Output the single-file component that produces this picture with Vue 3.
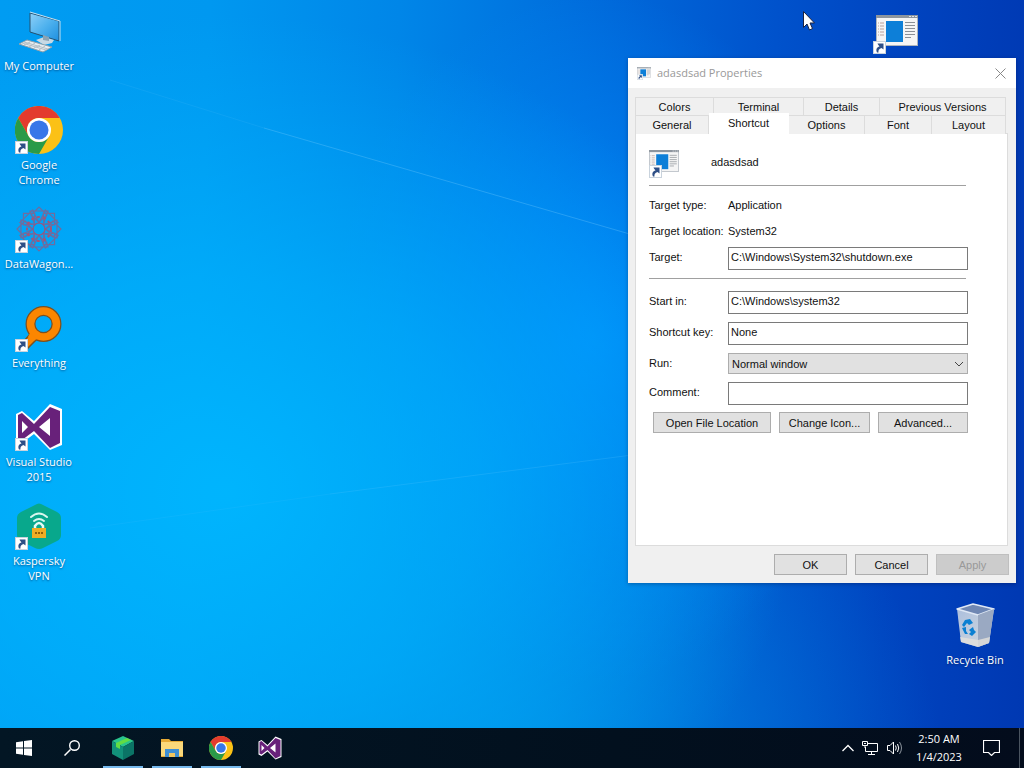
<script setup>
import { ref } from 'vue'

const desktopIcons = [
  { icon: 'computer', label: 'My Computer', shortcut: false },
  { icon: 'chrome', label: 'Google Chrome', shortcut: true },
  { icon: 'datawagon', label: 'DataWagon...', shortcut: true },
  { icon: 'everything', label: 'Everything', shortcut: true },
  { icon: 'vs', label: 'Visual Studio 2015', shortcut: true },
  { icon: 'vpn', label: 'Kaspersky VPN', shortcut: true },
]

const backTabs = ['Colors', 'Terminal', 'Details', 'Previous Versions']
const frontTabs = ['General', 'Shortcut', 'Options', 'Font', 'Layout']
const activeTab = ref('Shortcut')

const form = ref({
  target: 'C:\\Windows\\System32\\shutdown.exe',
  startIn: 'C:\\Windows\\system32',
  key: 'None',
  run: 'Normal window',
  comment: '',
})

const taskbarApps = [
  { icon: 'cube', label: 'Kaspersky', open: true },
  { icon: 'folder', label: 'File Explorer', open: true },
  { icon: 'chrome', label: 'Google Chrome', open: true },
  { icon: 'vs', label: 'Visual Studio', open: false },
]

const petals = [0, 45, 90, 135, 180, 225, 270, 315]
</script>

<template>
  <!-- shared icon shapes -->
  <svg class="sprite" aria-hidden="true">
    <linearGradient id="screen" x1="0" y1="0" x2="1" y2="1">
      <stop offset="0" stop-color="#8fd0f8" />
      <stop offset="0.5" stop-color="#4fb2ee" />
      <stop offset="1" stop-color="#1d8fe0" />
    </linearGradient>
    <linearGradient id="bin" x1="0" y1="0" x2="1" y2="1">
      <stop offset="0" stop-color="#a9bddd" />
      <stop offset="1" stop-color="#d4dade" />
    </linearGradient>
    <symbol id="computer" viewBox="0 0 48 48">
      <path d="M15 6 L44 14 V34 L15 25Z" fill="url(#screen)" stroke="#24506f" />
      <path d="M15 5 L45 14 V34" fill="none" stroke="#c6e2f2" />
      <path d="M21 33 L29 30 L39 33 L37 36 L29 38Z" fill="#c8d9e4" />
      <path d="M28 28 L34 30 V34 L28 33Z" fill="#8ba3b3" />
      <path d="M12 33 L37 40 L28 45 L4 37Z" fill="#e8edf0" stroke="#8fa0ab" />
      <path d="M9 35 L33 42 M7 36 L31 43 M15 35 L9 38 M20 36 L14 40 M25 38 L19 41 M30 39 L24 43" stroke="#b4bfc6" />
    </symbol>
    <symbol id="chrome" viewBox="0 0 48 48">
      <circle cx="24" cy="24" r="24" fill="#fbc116" />
      <path d="M3.2 12 A24 24 0 0 1 44.8 12 H24 A12 12 0 0 0 13.6 30Z" fill="#e33b2e" />
      <path d="M3.2 12 A24 24 0 0 0 24 48 L34.4 30 A12 12 0 0 1 13.6 30Z" fill="#2a9a48" />
      <circle cx="24" cy="24" r="12" fill="#fff" />
      <circle cx="24" cy="24" r="9.5" fill="#3877e8" />
    </symbol>
    <symbol id="datawagon" viewBox="0 0 48 48">
      <g fill="none" stroke="#6d6da0" stroke-width="1.200">
        <path v-for="a in petals" :key="a" d="M24 17 L16 10 L24 2 L32 10Z M20 20 L15 6 H33 L28 20" :transform="`rotate(${a} 24 24)`" />
        <circle cx="24" cy="24" r="6" stroke="#965783" />
        <circle cx="24" cy="24" r="12" stroke="#a55578" stroke-width="2" stroke-dasharray="3 3" />
      </g>
    </symbol>
    <symbol id="everything" viewBox="0 0 48 48">
      <path d="M16 29 L4 43 L9 48 L22 35" fill="#fb8600" stroke="#7c501f" stroke-width="1.5" />
      <circle cx="28.500" cy="20" r="13" fill="none" stroke="#7c501f" stroke-width="10" />
      <circle cx="28.500" cy="20" r="13" fill="none" stroke="#fb8600" stroke-width="7.500" />
      <path d="M15 29 L22 35 L18 37 L13 33Z" fill="#fb8600" />
    </symbol>
    <symbol id="vs" viewBox="0 0 48 48">
      <path d="M1 11 L7 8 L19 18 L35 1 L47 6 V42 L35 47 L19 31 L7 40 L1 37Z" fill="#fff" />
      <path d="M3 12 L7 10 L19 21 L35 4 L45 8 V40 L35 45 L19 28 L7 37 L3 35Z M7 18 V30 L13 24Z M35 15 L24 24 L35 33Z" fill="#68217a" fill-rule="evenodd" />
    </symbol>
    <symbol id="vpn" viewBox="0 0 48 48">
      <path d="M20 3 Q24 0 28 3 L42 10 Q46 12 46 16 V33 Q46 37 42 39 L28 46 Q24 48 20 46 L6 39 Q2 37 2 33 V16 Q2 12 6 10Z" fill="#08a88c" />
      <path d="M16 15 Q24 8 32 15 M19 19 Q24 15 29 19" fill="none" stroke="#d8f6ee" stroke-width="2" stroke-linecap="round" />
      <path d="M20 27 V24 Q24 18 28 24 V27" fill="none" stroke="#e8faf6" stroke-width="2.500" />
      <rect x="17" y="26" width="14" height="10" fill="#f0ad24" />
      <path d="M20 31 H22 M23 31 H25 M26 31 H28" stroke="#91610a" stroke-width="2" />
    </symbol>
    <symbol id="program" viewBox="0 0 42 31">
      <rect x="0.500" y="0.500" width="41" height="30" fill="#f5f5f5" stroke="#aeb5bd" />
      <path d="M0 1.500 H42" stroke="#8d959e" stroke-width="3" />
      <path d="M33 1.500 H35 M36 1.500 H38 M39 1.500 H41" stroke="#e0e3e6" />
      <rect x="10" y="6" width="17" height="21" fill="#0d7fd8" />
      <path d="M2 8 H8 M2 11 H8 M2 14 H8 M2 17 H8 M2 20 H8" stroke="#b9a29b" stroke-dasharray="1 1 4" />
      <path d="M29 7.500 H39 M29 10.500 H39 M29 13.500 H39 M29 16.500 H39 M29 19.500 H39 M29 22.500 H35" stroke="#8b9096" />
    </symbol>
    <symbol id="arrow" viewBox="0 0 13 13">
      <rect x="0.500" y="0.500" width="12" height="12" fill="#fff" stroke="#c9d3dd" />
      <path d="M4 11.500 C2.500 8 4 6 6.500 5.500 L5 3.500 L4.500 2.500 H10.500 V8.500 L8.500 7 C6 8 5 9 5.500 11.500Z" fill="#2e4f86" />
    </symbol>
    <symbol id="recycle" viewBox="0 0 42 46">
      <path d="M3 6 L19 1 L40 6 L35 40 L24 44 L7 39Z" fill="url(#bin)" />
      <path d="M3 6 L19 1 L40 6 L24 12Z" fill="#6f87b3" stroke="#dfe8f5" stroke-width="1.500" stroke-linejoin="round" />
      <path d="M24 12 L40 6 L35 40 L24 44Z" fill="#9aa9c2" />
      <path d="M6 34 L24 37 L36 34 L35 40 L24 44 L7 39Z" fill="#e4e1dc" opacity="0.800" />
      <path d="M11 17 L16 16 L19 20 L15 22 L13 20 L10 24 L8 22Z M8 25 L12 24 L12 28 L14 31 L11 31Z M15 27 L19 24 L20 27 L22 29 L18 33 L15 31 L17 29Z" fill="#0b80d2" />
    </symbol>
    <symbol id="cube" viewBox="0 0 24 24">
      <path d="M12 0 L23 5 L12 11 L1 5Z" fill="#29c48d" />
      <path d="M1 5 L12 11 V24 L1 18Z" fill="#12917a" />
      <path d="M23 5 L12 11 V24 L23 18Z" fill="#0b7466" />
      <path d="M5 7 L16 2 L20 4 L9 9 V13 L5 11Z" fill="#62dc44" />
    </symbol>
    <symbol id="folder" viewBox="0 0 24 24">
      <path d="M1 3 H9 L11 5 H23 V21 H1Z" fill="#e7aa35" />
      <path d="M1 6 H23 V20 H1Z" fill="#fbd87a" />
      <path d="M5 21 V13 H19 V21 H15 V17 H9 V21Z" fill="#3f8fd3" />
      <path d="M9 21 V17 H15 V21Z" fill="#f2c65f" />
    </symbol>
  </svg>

  <div class="screen">
    <svg class="rays" viewBox="0 0 1024 768" preserveAspectRatio="none" aria-hidden="true">
      <path d="M264 128 L640 237" stroke="#7cd0ff" opacity="0.300" />
      <path d="M110 80 L264 128" stroke="#7cd0ff" opacity="0.100" />
      <path d="M330 494 L640 454" stroke="#60c8ff" opacity="0.200" />
      <path d="M90 528 L330 494" stroke="#60c8ff" opacity="0.100" />
    </svg>

    <main class="desktop">
      <nav class="icon-column">
        <a v-for="item in desktopIcons" :key="item.label" href="#" class="desk-icon">
          <span class="icon-box">
            <svg class="icon-art"><use :href="'#' + item.icon" /></svg>
            <svg v-if="item.shortcut" class="badge"><use href="#arrow" /></svg>
          </span>
          <span class="icon-label">{{ item.label }}</span>
        </a>
      </nav>

      <a href="#" class="desk-icon program-icon" aria-label="adasdsad">
        <svg class="program-art"><use href="#program" /></svg>
        <svg class="badge"><use href="#arrow" /></svg>
      </a>
      <a href="#" class="desk-icon recycle-icon">
        <svg class="recycle-art"><use href="#recycle" /></svg>
        <span class="icon-label">Recycle Bin</span>
      </a>

      <section class="window" role="dialog" aria-label="adasdsad Properties">
        <header class="title-bar">
          <span class="title-icon">
            <svg class="title-art"><use href="#program" /></svg>
            <svg class="title-badge"><use href="#arrow" /></svg>
          </span>
          <span class="title-text">adasdsad Properties</span>
          <button class="close" aria-label="Close">
            <svg width="11" height="11" viewBox="0 0 11 11"><path d="M0.500 0.500 L10.500 10.500 M10.500 0.500 L0.500 10.500" stroke="#888" /></svg>
          </button>
        </header>

        <div class="tabs" role="tablist">
          <div class="tab-row back">
            <button v-for="t in backTabs" :key="t" role="tab" class="tab">{{ t }}</button>
          </div>
          <div class="tab-row front">
            <button
              v-for="t in frontTabs"
              :key="t"
              role="tab"
              class="tab"
              :class="{ active: t === activeTab }"
              :aria-selected="t === activeTab"
              @click="activeTab = t"
            >{{ t }}</button>
          </div>
        </div>

        <form class="panel" @submit.prevent>
          <div class="file-head">
            <span class="file-icon">
              <svg class="file-art"><use href="#program" /></svg>
              <svg class="badge"><use href="#arrow" /></svg>
            </span>
            <span class="file-name">adasdsad</span>
          </div>
          <hr />
          <div class="info">
            <span>Target type:</span><span>Application</span>
            <span>Target location:</span><span>System32</span>
          </div>
          <div class="field">
            <label for="target">Target:</label>
            <input id="target" v-model="form.target" type="text" spellcheck="false" />
          </div>
          <hr class="split" />
          <div class="fields">
            <div class="field">
              <label for="start">Start in:</label>
              <input id="start" v-model="form.startIn" type="text" spellcheck="false" />
            </div>
            <div class="field">
              <label for="key">Shortcut key:</label>
              <input id="key" v-model="form.key" type="text" spellcheck="false" />
            </div>
            <div class="field">
              <label for="run">Run:</label>
              <span class="select-wrap">
                <select id="run" v-model="form.run">
                  <option>Normal window</option>
                  <option>Minimized</option>
                  <option>Maximized</option>
                </select>
                <svg class="chevron" viewBox="0 0 10 6"><path d="M1 1 L5 5 L9 1" fill="none" stroke="#444" /></svg>
              </span>
            </div>
            <div class="field">
              <label for="comment">Comment:</label>
              <input id="comment" v-model="form.comment" type="text" />
            </div>
          </div>
          <div class="actions">
            <button type="button" class="btn">Open File Location</button>
            <button type="button" class="btn">Change Icon...</button>
            <button type="button" class="btn">Advanced...</button>
          </div>
        </form>

        <footer class="window-foot">
          <button class="btn">OK</button>
          <button class="btn">Cancel</button>
          <button class="btn" disabled>Apply</button>
        </footer>
      </section>

      <svg class="cursor" viewBox="0 0 12 20" aria-hidden="true">
        <path d="M0.500 0.500 V16.500 L4 13 L6.500 19 L9.500 17.500 L7 12 H11.500Z" fill="#fff" stroke="#1b2340" />
      </svg>
    </main>

    <footer class="taskbar">
      <button class="task-btn" aria-label="Start">
        <svg width="16" height="16" viewBox="0 0 16 16"><path d="M0 2.300 L7 1.300 V7.500 H0Z M8 1.100 L16 0 V7.500 H8Z M0 8.500 H7 V14.700 L0 13.700Z M8 8.500 H16 V16 L8 14.900Z" fill="#fff" /></svg>
      </button>
      <button class="task-btn" aria-label="Search">
        <svg width="16" height="16" viewBox="0 0 16 16"><path d="M0.500 15.500 L6.500 9.500" stroke="#fff" stroke-width="1.500" /><circle cx="10.500" cy="5.500" r="4.800" fill="none" stroke="#fff" stroke-width="1.400" /></svg>
      </button>
      <div class="apps">
        <button v-for="app in taskbarApps" :key="app.label" class="app" :class="{ open: app.open }" :aria-label="app.label">
          <svg class="app-art"><use :href="'#' + app.icon" /></svg>
        </button>
      </div>
      <div class="tray">
        <svg width="12" height="8" viewBox="0 0 12 8"><path d="M0.500 7 L6 1.500 L11.500 7" fill="none" stroke="#fff" stroke-width="1.300" /></svg>
        <svg width="17" height="14" viewBox="0 0 17 14"><path d="M5.500 2.500 H15.500 V10.500 H3.500 V6 M9.500 10.500 V13 M6 13.500 H13 M0.500 0.500 H5.500 V4.500 H0.500Z M3 4.500 V7 M2 2.500 H4" fill="none" stroke="#fff" /></svg>
        <svg width="16" height="14" viewBox="0 0 16 14"><path d="M0.500 4.500 H3 L6.500 1 V13 L3 9.500 H0.500Z M8.500 4.500 Q10 7 8.500 9.500 M10.500 3 Q13 7 10.500 11" fill="none" stroke="#fff" /><path d="M12.500 1 Q16.500 7 12.500 13" fill="none" stroke="#8b939c" /></svg>
      </div>
      <div class="clock"><span>2:50 AM</span><span>1/4/2023</span></div>
      <button class="notes" aria-label="Notifications">
        <svg width="17" height="16" viewBox="0 0 17 16"><path d="M0.500 0.500 H16.500 V12.500 H11.500 L8.500 15.500 L5.500 12.500 H0.500Z" fill="none" stroke="#fff" stroke-width="1.200" /></svg>
      </button>
      <span class="show-desktop"></span>
    </footer>
  </div>
</template>

<style>
body {
  margin: 0;
  background: #0078d7;
}
</style>

<style scoped>
.sprite {
  position: absolute;
  width: 0;
  height: 0;
}
.screen {
  position: relative;
  display: flex;
  flex-direction: column;
  min-height: 100vh;
  overflow: hidden;
  font-family: "Open Sans", "Noto Sans", sans-serif;
  font-size: 11px;
  background:
    radial-gradient(ellipse 56% 62% at 22% 64%, rgba(0, 184, 255, 0.9), rgba(0, 182, 255, 0.6) 45%, rgba(0, 170, 255, 0)),
    radial-gradient(ellipse 26% 45% at 58% 44%, rgba(0, 146, 255, 0.8), rgba(0, 140, 255, 0)),
    radial-gradient(ellipse 42% 50% at 50% 100%, rgba(0, 156, 232, 0.7), rgba(0, 140, 230, 0)),
    linear-gradient(92deg, #009cf2 0%, #0098f0 20%, #0086e8 38%, #006cdc 56%, #0052cc 74%, #0044c0 86%, #0038b2 100%);
}
.rays {
  position: absolute;
  inset: 0;
  width: 100%;
  height: 100%;
}
.desktop {
  position: relative;
  flex: 1;
}

.icon-column {
  display: flex;
  flex-direction: column;
  width: 78px;
}
.desk-icon {
  display: flex;
  flex-direction: column;
  align-items: center;
  gap: 3px;
  color: #fff;
  font-size: 11px;
  line-height: 15px;
  text-align: center;
  text-decoration: none;
  text-shadow: 0 1px 2px rgba(0, 30, 80, 0.6);
}
.icon-column .desk-icon {
  height: 92px;
  padding-top: 7px;
}
.icon-label {
  max-width: 74px;
}
.icon-box {
  position: relative;
  width: 48px;
  height: 48px;
}
.icon-art {
  display: block;
  width: 48px;
  height: 48px;
}
.badge {
  position: absolute;
  left: 0;
  bottom: 0;
  width: 13px;
  height: 13px;
}
.program-icon {
  position: absolute;
  top: 15px;
  right: 106px;
  width: 45px;
  height: 39px;
  align-items: flex-end;
}
.program-art {
  width: 42px;
  height: 31px;
}
.recycle-icon {
  position: absolute;
  top: 603px;
  right: 10px;
  width: 78px;
}
.recycle-art {
  width: 42px;
  height: 46px;
}
.cursor {
  position: absolute;
  top: 11px;
  right: 209px;
  width: 12px;
  height: 20px;
}

.window {
  position: absolute;
  top: 58px;
  right: 8px;
  width: 388px;
  background: #f0f0f0;
  box-shadow: 0 1px 4px rgba(0, 0, 40, 0.3);
  color: #111;
  font-family: "Liberation Sans", Arial, sans-serif;
  font-size: 11px;
}
.title-bar {
  display: flex;
  align-items: center;
  height: 30px;
  padding: 0 10px 0 9px;
  background: #fff;
  color: #999;
  font-family: "Open Sans", "Noto Sans", sans-serif;
}
.title-icon {
  position: relative;
  height: 13px;
  margin-right: 6px;
}
.title-art {
  display: block;
  width: 14px;
  height: 11px;
}
.title-badge {
  position: absolute;
  left: 0;
  bottom: 0;
  width: 6px;
  height: 6px;
}
.title-text {
  flex: 1;
  padding-bottom: 2px;
}
.close {
  display: flex;
  padding: 0;
  border: 0;
  background: none;
}

.tabs {
  margin: 9px 10px 0 7px;
}
.tab-row {
  display: grid;
  height: 18px;
}
.back {
  grid-template-columns: 79fr 90fr 76fr 126fr;
}
.front {
  grid-template-columns: 74fr 80fr 76fr 67fr 74fr;
}
.tab {
  padding: 0;
  border: 1px solid #dcdcdc;
  border-width: 1px 1px 0 0;
  background: #f0f0f0;
  color: #111;
  font-family: inherit;
  font-size: 11px;
  line-height: 16px;
}
.back .tab {
  padding-top: 1px;
}
.tab:first-child {
  border-left-width: 1px;
}
.tab.active {
  z-index: 1;
  height: 21px;
  margin-top: -2px;
  padding: 0 0 2px;
  border-color: #fff;
  background: #fff;
}

.panel {
  min-height: 395px;
  margin: 0 8px 0 7px;
  padding: 16px 39px 0 13px;
  border: 1px solid #dcdcdc;
  background: #fff;
}
.file-head {
  display: flex;
  align-items: center;
  height: 28px;
  margin-bottom: 7px;
  gap: 32px;
}
.file-icon {
  position: relative;
  width: 30px;
  height: 28px;
}
.file-art {
  display: block;
  width: 30px;
  height: 22px;
}
.file-name {
  padding-bottom: 4px;
}
hr {
  height: 1px;
  margin: 0 2px 0 0;
  border: 0;
  background: #a0a0a0;
}
.info {
  display: grid;
  grid-template-columns: 79px 1fr;
  padding: 6px 0 3px;
  line-height: 26px;
}
.split {
  margin: 8px 2px 12px 0;
}
.fields {
  display: flex;
  flex-direction: column;
  gap: 8px;
}
.field {
  display: grid;
  grid-template-columns: 79px 1fr;
  line-height: 21px;
}
input,
select {
  box-sizing: border-box;
  width: 100%;
  border: 1px solid #7a7a7a;
  border-radius: 0;
  background: #fff;
  color: #111;
  font-family: inherit;
  font-size: 11px;
}
input {
  height: 23px;
  padding: 0 2px 4px;
}
.select-wrap {
  position: relative;
  display: flex;
}
select {
  appearance: none;
  height: 21px;
  padding: 0 20px 0 3px;
  border-color: #adadad;
  background: #e1e1e1;
}
.chevron {
  position: absolute;
  top: 8px;
  right: 4px;
  width: 10px;
  height: 6px;
}
.actions {
  display: grid;
  grid-template-columns: 118fr 91fr 90fr;
  gap: 8px;
  margin: 7px 0 0 4px;
}
.btn {
  height: 21px;
  padding: 0;
  border: 1px solid #adadad;
  background: #e1e1e1;
  color: #111;
  font-family: inherit;
  font-size: 11px;
}
.btn:disabled {
  border-color: #bfbfbf;
  background: #ccc;
  color: #999;
}
.window-foot {
  display: flex;
  justify-content: flex-end;
  gap: 8px;
  padding: 8px 7px 8px 0;
}
.window-foot .btn {
  width: 73px;
}

.taskbar {
  position: relative;
  display: flex;
  align-items: center;
  height: 40px;
  background: linear-gradient(90deg, #031624, #02101e 60%, #030c1c);
  color: #fff;
}
.task-btn,
.app,
.notes {
  display: flex;
  align-items: center;
  justify-content: center;
  height: 40px;
  padding: 0;
  border: 0;
  background: none;
}
.task-btn {
  width: 48px;
}
.apps {
  display: flex;
  gap: 9px;
  margin-left: 7px;
}
.app {
  box-sizing: border-box;
  width: 40px;
  padding-top: 2px;
  border-bottom: 2px solid transparent;
}
.app.open {
  border-bottom-color: #76b9ed;
}
.app-art {
  width: 24px;
  height: 24px;
}
.tray {
  display: flex;
  align-items: center;
  gap: 8px;
  margin-left: auto;
}
.clock {
  display: flex;
  flex-direction: column;
  width: 72px;
  font-size: 11px;
  line-height: 18px;
  text-align: center;
}
.notes {
  width: 32px;
  margin-right: 12px;
}
.show-desktop {
  width: 4px;
  height: 40px;
  border-left: 1px solid #4a5460;
}
</style>
